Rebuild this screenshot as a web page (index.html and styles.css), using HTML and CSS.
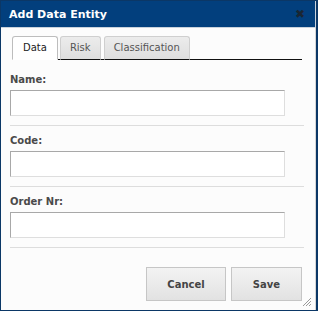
FILE: index.html
```html
<!DOCTYPE html>
<html lang="en">
<head>
    <meta charset="UTF-8">
    <title>Add Data Entity</title>
    <link rel="stylesheet" href="styles.css">
</head>
<body>
    <div class="dialog">
        <div class="titlebar">
            <span class="title">Add Data Entity</span>
            <span class="close">&#10006;</span>
        </div>
        <div class="content">
            <div class="tabs">
                <div class="tab active">Data</div>
                <div class="tab">Risk</div>
                <div class="tab">Classification</div>
            </div>
            <div class="field first">
                <label>Name:</label>
                <input type="text">
            </div>
            <div class="field">
                <label>Code:</label>
                <input type="text">
            </div>
            <div class="field">
                <label>Order Nr:</label>
                <input type="text">
            </div>
            <div class="buttons">
                <button class="btn cancel">Cancel</button>
                <button class="btn save">Save</button>
            </div>
        </div>
        <svg class="grip" width="10" height="10" viewBox="0 0 10 10">
            <path d="M9 1 L1 9 M9 4 L4 9 M9 7 L7 9" stroke="#9a9a9a" stroke-width="1"/>
        </svg>
    </div>
</body>
</html>
```
FILE: styles.css
```css
body {
    margin: 0;
    font-family: "DejaVu Sans", Verdana, sans-serif;
    background: #ffffff;
}

.dialog {
    position: relative;
    width: 318px;
    height: 311px;
    box-sizing: border-box;
    border: 1px solid #0b3766;
    border-right-width: 2px;
    background: #fcfcfc;
    display: flex;
    flex-direction: column;
}

.titlebar {
    height: 26px;
    background-color: #023f7d;
    border-bottom: 1px solid #c9d2dc;
    border-right: 1px solid #c9d2dc;
    display: flex;
    align-items: center;
    justify-content: space-between;
    padding: 0 10px 0 8px;
}

.title {
    color: white;
    font-size: 11px;
    font-weight: bold;
}

.close {
    color: #1a2633;
    font-size: 12px;
    font-weight: bold;
}

.content {
    padding: 8px 11px 0 9px;
    border-right: 1px solid #d6d6d6;
    flex: 1;
}

.tabs {
    display: flex;
    align-items: flex-end;
    margin-left: 2px;
    margin-right: 2px;
    border-bottom: 1px solid #111;
}

.tab {
    height: 22px;
    line-height: 22px;
    padding: 0 9px;
    margin-right: 3px;
    margin-bottom: -1px;
    font-size: 10px;
    color: #555;
    border: 1px solid #cfcfcf;
    border-bottom: 1px solid #111;
    border-radius: 3px 3px 0 0;
    background: linear-gradient(#ececec, #dedede);
}

.tab.active {
    padding: 0 10px;
    margin-right: 2px;
    color: #222;
    background: #ffffff;
    border-color: #bdbdbd;
    border-bottom: 1px solid #ffffff;
}

.field {
    padding: 9px 0 9px 0;
    border-bottom: 1px solid #dddddd;
    display: flex;
    flex-direction: column;
    gap: 4px;
}

.field.first {
    padding-top: 14px;
}

.field label {
    height: 12px;
    line-height: 12px;
    font-size: 10px;
    font-weight: bold;
    color: #4a4a4a;
}

.field input {
    width: 275px;
    height: 26px;
    box-sizing: border-box;
    margin: 0;
    border: 1px solid #dedede;
    border-top-color: #a8a8a8;
    border-left-color: #a8a8a8;
    background: #ffffff;
}

.buttons {
    display: flex;
    justify-content: flex-end;
    gap: 5px;
    padding-top: 19px;
    padding-right: 2px;
}

.btn {
    height: 34px;
    font-family: "DejaVu Sans", Verdana, sans-serif;
    font-size: 10px;
    font-weight: bold;
    color: #444;
    border: 1px solid #c6c6c6;
    background: linear-gradient(#f3f3f3, #e2e2e2);
    cursor: pointer;
}

.cancel {
    width: 80px;
}

.save {
    width: 71px;
}

.grip {
    position: absolute;
    right: 4px;
    bottom: 3px;
}
```
